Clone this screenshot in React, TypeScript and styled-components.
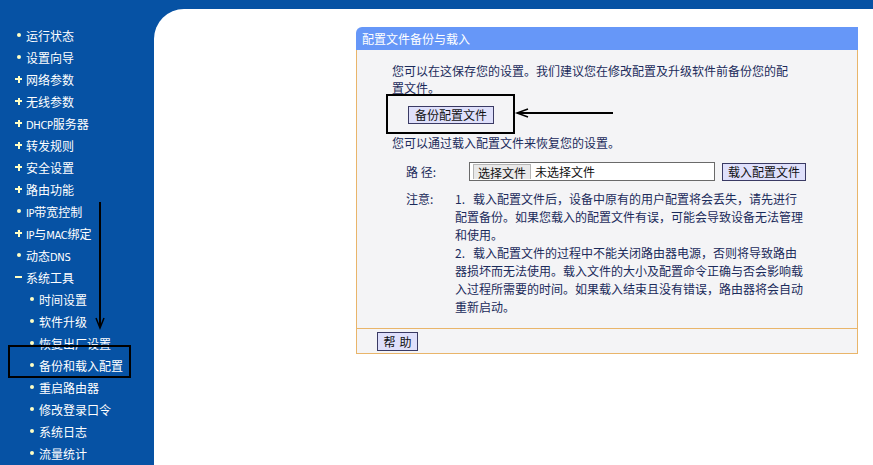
import React from 'react';
import styled, { createGlobalStyle } from 'styled-components';

const GlobalStyle = createGlobalStyle`
    html, body {
        margin: 0;
        padding: 0;
        background: #0652a4;
    }
    body {
        font-family: "Noto Sans CJK SC", "Noto Sans", sans-serif;
        font-size: 12px;
    }
`;

const Page = styled.div`
    position: relative;
    display: grid;
    grid-template-columns: 154px 1fr;
    width: 873px;
    height: 465px;
    overflow: hidden;
    background: #0652a4;
`;

const Sidebar = styled.ul`
    list-style: none;
    margin: 0;
    padding: 24px 0 0 15px;
`;

type NavItemProps = {
    $child?: boolean;
}

const NavItem = styled.li<NavItemProps>`
    display: flex;
    align-items: center;
    gap: 4px;
    height: 22px;
    padding-left: ${props => props.$child ? '13px' : '0'};
    color: #ffffff;
    font-size: 12px;
    white-space: nowrap;
`;

// latin letters in the menu are narrow, like the old bitmap font
const Latin = styled.span`
    font-family: "DejaVu Sans Condensed", "Liberation Sans Narrow", sans-serif;
    font-size: 11px;
    letter-spacing: -0.3px;
`;

type BulletKind = 'dot' | 'plus' | 'minus';

const bulletColor = '#ffffc4';

const Bullet = styled.span<{ $kind: BulletKind }>`
    display: inline-flex;
    align-items: center;
    justify-content: center;
    width: 7px;
    height: 7px;
    flex: none;
    background: ${props => {
        const bar = `linear-gradient(${bulletColor}, ${bulletColor})`;
        if (props.$kind === 'plus') return `${bar} center / 7px 2px no-repeat, ${bar} center / 2px 7px no-repeat`;
        if (props.$kind === 'minus') return `${bar} center / 7px 2px no-repeat`;
        return 'none';
    }};

    &::before {
        content: '';
        display: ${props => props.$kind === 'dot' ? 'block' : 'none'};
        width: 4px;
        height: 4px;
        border-radius: 50%;
        background: ${bulletColor};
    }
`;

const Main = styled.main`
    margin-top: 9px;
    padding: 18px 0 0 202px;
    background: #ffffff;
    border-top-left-radius: 30px;
`;

const Panel = styled.section`
    width: 502px;
    color: #1b2b5b;
`;

const PanelTitle = styled.h2`
    margin: 0;
    height: 23px;
    padding-left: 6px;
    line-height: 23px;
    font-size: 12px;
    font-weight: normal;
    color: #ffffff;
    background: #6697f8;
    border-top-left-radius: 6px;
`;

const PanelBody = styled.div`
    padding: 12px 0 12px 35px;
    background: #f4f4f6;
    border-left: 1px solid #e9b56a;
    border-right: 1px solid #e9b56a;
`;

const Para = styled.p`
    margin: 0;
    line-height: 17px;
    white-space: nowrap;
`;

const Button = styled.button`
    height: 18px;
    padding: 0 6px;
    font-family: inherit;
    font-size: 12px;
    line-height: 16px;
    color: #111;
    white-space: nowrap;
    background: #dfe0fb;
    border: 1px solid #3a3a64;
    border-radius: 0;
`;

const BackupRow = styled.div`
    margin: 10px 0 10px 16px;
`;

type FieldProps = {
    $labelWidth: number;
}

const Field = styled.div<FieldProps>`
    display: flex;
    align-items: flex-start;
    margin-left: 14px;

    & > :first-child {
        flex: none;
        width: ${props => props.$labelWidth}px;
    }
`;

const PathField = styled(Field)`
    align-items: center;
    margin-top: 12px;
    height: 17px;
`;

const FieldLabel = styled.span`
    line-height: 17px;
    white-space: pre;
`;

const FileBox = styled.div`
    display: flex;
    align-items: center;
    gap: 4px;
    width: 238px;
    height: 15px;
    padding: 1px 3px;
    background: #ffffff;
    border: 1px solid #6a6a6a;
    margin-right: 7px;
`;

const FileButton = styled.span`
    height: 15px;
    padding: 0 4px;
    line-height: 15px;
    color: #111;
    background: #e9e9e9;
    border: 1px solid #b5b5b5;
    border-bottom: none;
    box-sizing: border-box;
`;

const FileName = styled.span`
    color: #111;
    line-height: 15px;
`;

const LoadButton = styled(Button)`
    width: 84px;
    padding: 0;
`;

const NoteField = styled(Field)`
    margin-top: 10px;
`;

const NoteText = styled.div`
    line-height: 18px;
    white-space: nowrap;
`;

const NoteNum = styled.span`
    display: inline-block;
    width: 18px;
`;

const PanelFooter = styled.div`
    display: flex;
    align-items: flex-start;
    height: 26px;
    padding: 3px 0 0 20px;
    box-sizing: border-box;
    background: #f4f4f6;
    border: 1px solid #e9b56a;
`;

const HelpButton = styled(Button)`
    height: 19px;
    width: 41px;
    padding: 0;
    letter-spacing: 4px;
    text-indent: 4px;
`;

const Annotations = styled.svg`
    position: absolute;
    top: 0;
    left: 0;
    pointer-events: none;
`;

const nav: { label: React.ReactNode; key: string; kind: BulletKind; child?: boolean }[] = [
    { key: 'status', label: '运行状态', kind: 'dot' },
    { key: 'wizard', label: '设置向导', kind: 'dot' },
    { key: 'network', label: '网络参数', kind: 'plus' },
    { key: 'wireless', label: '无线参数', kind: 'plus' },
    { key: 'dhcp', label: <><Latin>DHCP</Latin>服务器</>, kind: 'plus' },
    { key: 'forward', label: '转发规则', kind: 'plus' },
    { key: 'security', label: '安全设置', kind: 'plus' },
    { key: 'routing', label: '路由功能', kind: 'plus' },
    { key: 'qos', label: <><Latin>IP</Latin>带宽控制</>, kind: 'dot' },
    { key: 'bind', label: <><Latin>IP</Latin>与<Latin>MAC</Latin>绑定</>, kind: 'plus' },
    { key: 'ddns', label: <>动态<Latin>DNS</Latin></>, kind: 'dot' },
    { key: 'tools', label: '系统工具', kind: 'minus' },
    { key: 'time', label: '时间设置', kind: 'dot', child: true },
    { key: 'upgrade', label: '软件升级', kind: 'dot', child: true },
    { key: 'factory', label: '恢复出厂设置', kind: 'dot', child: true },
    { key: 'backup', label: '备份和载入配置', kind: 'dot', child: true },
    { key: 'reboot', label: '重启路由器', kind: 'dot', child: true },
    { key: 'password', label: '修改登录口令', kind: 'dot', child: true },
    { key: 'log', label: '系统日志', kind: 'dot', child: true },
    { key: 'stats', label: '流量统计', kind: 'dot', child: true },
];

const App: React.FC = () => {
    return (
        <Page>
            <GlobalStyle />
            <Sidebar>
                {nav.map(item => (
                    <NavItem key={item.key} $child={item.child}>
                        <Bullet $kind={item.kind} />
                        <span>{item.label}</span>
                    </NavItem>
                ))}
            </Sidebar>

            <Main>
                <Panel>
                    <PanelTitle>配置文件备份与载入</PanelTitle>
                    <PanelBody>
                        <Para>
                            您可以在这保存您的设置。我们建议您在修改配置及升级软件前备份您的配<br />
                            置文件。
                        </Para>
                        <BackupRow>
                            <Button>备份配置文件</Button>
                        </BackupRow>
                        <Para>您可以通过载入配置文件来恢复您的设置。</Para>

                        <PathField $labelWidth={63}>
                            <FieldLabel>路 径:</FieldLabel>
                            <FileBox>
                                <FileButton>选择文件</FileButton>
                                <FileName>未选择文件</FileName>
                            </FileBox>
                            <LoadButton>载入配置文件</LoadButton>
                        </PathField>

                        <NoteField $labelWidth={49}>
                            <FieldLabel>注意:</FieldLabel>
                            <NoteText>
                                <NoteNum>1.</NoteNum>载入配置文件后，设备中原有的用户配置将会丢失，请先进行<br />
                                配置备份。如果您载入的配置文件有误，可能会导致设备无法管理<br />
                                和使用。<br />
                                <NoteNum>2.</NoteNum>载入配置文件的过程中不能关闭路由器电源，否则将导致路由<br />
                                器损坏而无法使用。载入文件的大小及配置命令正确与否会影响载<br />
                                入过程所需要的时间。如果载入结束且没有错误，路由器将会自动<br />
                                重新启动。
                            </NoteText>
                        </NoteField>
                    </PanelBody>
                    <PanelFooter>
                        <HelpButton>帮助</HelpButton>
                    </PanelFooter>
                </Panel>
            </Main>

            {/* hand-drawn annotation marks over the screenshot */}
            <Annotations width="873" height="465" viewBox="0 0 873 465">
                <g fill="none" stroke="#000" strokeWidth="2">
                    <rect x="9" y="346" width="121" height="31" />
                    <rect x="387" y="95" width="127" height="38" />
                    <line x1="100" y1="202" x2="100" y2="327" />
                    <polyline points="96,318 100,328 104,318" strokeWidth="1.5" />
                    <line x1="518" y1="113" x2="613" y2="113" />
                    <polyline points="528,109 517,113 528,117" strokeWidth="1.5" />
                </g>
            </Annotations>
        </Page>
    );
}

export default App;
